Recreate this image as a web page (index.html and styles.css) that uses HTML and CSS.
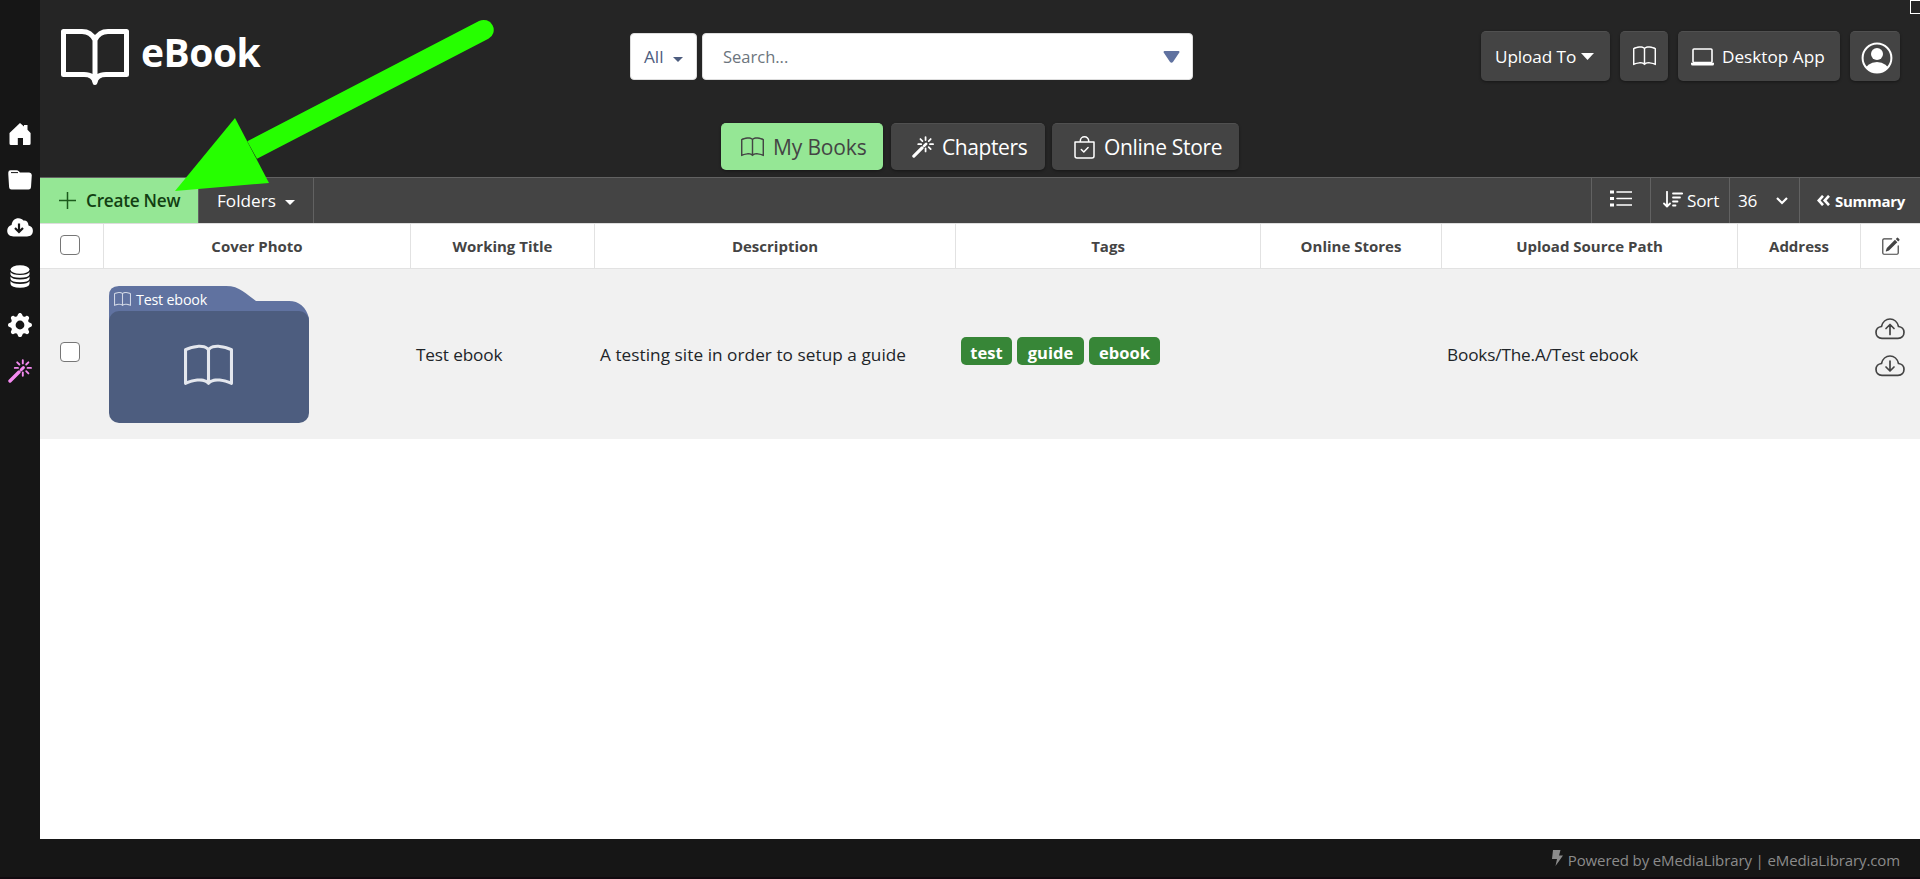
FILE: index.html
```html
<!DOCTYPE html>
<html lang="en">
<head>
<meta charset="utf-8">
<title>eBook</title>
<link rel="stylesheet" href="styles.css">
</head>
<body>
<svg class="defs" width="0" height="0">
  <symbol id="book" viewBox="0 0 16 16"><path fill="currentColor" d="M1 2.828c.885-.37 2.154-.769 3.388-.893 1.33-.134 2.458.063 3.112.752v9.746c-.935-.53-2.12-.603-3.213-.493-1.18.12-2.37.461-3.287.811V2.828zm7.5-.141c.654-.689 1.782-.886 3.112-.752 1.234.124 2.503.523 3.388.893v9.923c-.918-.35-2.107-.692-3.287-.81-1.094-.111-2.278-.039-3.213.492V2.687zM8 1.783C7.015.936 5.587.81 4.287.94c-1.514.153-3.042.672-3.994 1.105A.5.5 0 0 0 0 2.5v11a.5.5 0 0 0 .707.455c.882-.4 2.303-.881 3.68-1.02 1.409-.142 2.59.087 3.223.877a.5.5 0 0 0 .78 0c.633-.79 1.814-1.019 3.222-.877 1.378.139 2.8.62 3.681 1.02A.5.5 0 0 0 16 13.5v-11a.5.5 0 0 0-.293-.455c-.952-.433-2.48-.952-3.994-1.105C10.413.809 8.985.936 8 1.783z"/></symbol>
  <symbol id="wand" viewBox="0 0 24 24"><g fill="none" stroke="currentColor" stroke-linecap="round"><path stroke-width="3.4" d="M2 22 11 13"/><path stroke-width="3" d="M13.2 10.8 15.4 8.6"/><path stroke-width="1.9" d="M14.8 1.2v3.2M14.8 13.4v3.4M6.8 8.9h3.2M19.6 8.9H23M9.2 3.3l2.2 2.2M20.4 3.3 18.2 5.5M18.2 12.200l2.200 2.200"/></g></symbol>
  <symbol id="caret" viewBox="0 0 10 5"><path fill="currentColor" d="M0 0h10L5 5z"/></symbol>
</svg>
<div class="app">
  <nav class="side">
    <svg width="22" height="22" viewBox="0 0 22 22"><path fill="#fff" d="M11 0 15 3.6V2h3.5v4.7L21.6 10v10.5q0 1.5-1.5 1.5H14v-7H8.8v7H2Q.5 22 .5 20.5V10z"/></svg>
    <svg width="24" height="20" viewBox="0 0 24 20"><path fill="#fff" d="M.3 4.4V2.5Q.3.3 2.6.3h6q1.2 0 2.2 1l1.2 1.2h9.2q2.4 0 2.6 2.6l-.8 12.2q-.2 2.3-2.4 2.3H3.4q-2.1 0-2.3-2.3z"/><path stroke="#161616" d="M3 2.6h7"/></svg>
    <svg width="26" height="19" viewBox="0 0 26 19"><path fill="#fff" d="M6.5 18.5C3 18.500 .2 16.500 .2 12.800 .2 9.800 2 7.500 4.600 7 5 3 7.800 .3 11.500 .3 13.800 .3 15.300 1.200 16.300 2.600 19 2 21.500 4 21.500 7.500 24.300 8 25.900 10 25.900 12.800 25.900 16.500 23.500 18.500 20 18.500Z"/><path fill="none" stroke="#161616" stroke-width="2.2" d="M12 5.500v8M8 10l4 4 4-4"/></svg>
    <svg width="20" height="23" viewBox="0 0 20 23"><ellipse cx="10" cy="4.500" rx="9.500" ry="4.300" fill="#fff"/><path fill="#fff" d="M.5 7q1.500 3 9.500 3t9.500-3v2.500q-1 3.300-9.500 3.300T.5 9.500zM.5 11.500q1.500 3 9.500 3t9.500-3V14q-1 3.300-9.500 3.300T.5 14zM.5 16q1.500 3 9.500 3t9.500-3v3q-1 3.800-9.500 3.800T.5 19z"/></svg>
    <svg width="24" height="24" viewBox="0 0 16 16"><path fill="#fff" d="M9.405 1.050c-.413-1.400-2.397-1.400-2.810 0l-.1.340a1.464 1.464 0 0 1-2.105.872l-.31-.17c-1.283-.698-2.686.705-1.987 1.987l.169.311c.446.82.023 1.841-.872 2.105l-.34.1c-1.400.413-1.400 2.397 0 2.810l.34.1a1.464 1.464 0 0 1 .872 2.105l-.17.31c-.698 1.283.705 2.686 1.987 1.987l.311-.169a1.464 1.464 0 0 1 2.105.872l.1.34c.413 1.400 2.397 1.400 2.810 0l.1-.34a1.464 1.464 0 0 1 2.105-.872l.31.17c1.283.698 2.686-.705 1.987-1.987l-.169-.311a1.464 1.464 0 0 1 .872-2.105l.34-.1c1.400-.413 1.400-2.397 0-2.810l-.34-.1a1.464 1.464 0 0 1-.872-2.105l.17-.31c.698-1.283-.705-2.686-1.987-1.987l-.311.169a1.464 1.464 0 0 1-2.105-.872l-.1-.34zM8 10.930a2.929 2.929 0 1 1 0-5.860 2.929 2.929 0 0 1 0 5.858z"/></svg>
    <svg class="pink" width="24" height="24"><use href="#wand"/></svg>
  </nav>
  <div class="main">
    <header class="head">
      <div class="top">
        <div class="brand">
          <svg width="70" height="58" viewBox="0 0 70 58"><path fill="none" stroke="#fff" stroke-width="5" stroke-linejoin="round" stroke-linecap="round" d="M35 12Q31 3.500 22 3.500H3.500v43H24Q34 46.500 35 54.500 36 46.500 46 46.500H66.500v-43H48Q39 3.500 35 12zV54"/></svg>
          <span class="logo">eBook</span>
        </div>
        <div class="search">
          <div class="all"><span>All</span><svg width="10" height="5"><use href="#caret"/></svg></div>
          <div class="field"><span>Search...</span><svg width="17" height="12" viewBox="0 0 17 12"><path fill="#6072a0" stroke="#6072a0" stroke-width="2" stroke-linejoin="round" d="M1.500 1h14l-6.200 9.200q-.8 1-1.600 0z"/></svg></div>
        </div>
        <div class="actions">
          <div class="btn upload"><span>Upload To</span><svg width="13" height="7" viewBox="0 0 10 5" preserveAspectRatio="none"><path fill="#fff" d="M0 0h10L5 5z"/></svg></div>
          <div class="btn bookbtn"><svg width="23" height="23"><use href="#book"/></svg></div>
          <div class="btn desk"><svg width="23" height="18" viewBox="0 0 23 18"><rect x="2" y="1" width="19" height="13.500" rx="1" fill="none" stroke="#fff" stroke-width="1.600"/><path fill="#fff" d="M0 14.700h23v1.300q0 1.500-1.500 1.500h-20Q0 17.500 0 16z"/></svg><span>Desktop App</span></div>
          <div class="btn user"><svg width="32" height="32" viewBox="0 0 32 32"><clipPath id="face"><circle cx="16" cy="16" r="14.500"/></clipPath><circle cx="16" cy="16" r="14.400" fill="none" stroke="#fff" stroke-width="2"/><circle cx="16" cy="12" r="6" fill="#fff"/><ellipse cx="16" cy="29" rx="12" ry="9" fill="#fff" clip-path="url(#face)"/></svg></div>
        </div>
      </div>
      <div class="tabs">
        <div class="tab on"><svg width="23" height="23"><use href="#book"/></svg><span>My Books</span></div>
        <div class="tab chap"><svg width="22" height="22"><use href="#wand"/></svg><span>Chapters</span></div>
        <div class="tab store"><svg width="21" height="23" viewBox="0 0 21 23"><path fill="none" stroke="#fff" stroke-width="1.500" stroke-linejoin="round" stroke-linecap="round" d="M1 6h19V20q0 2-2 2H3q-2 0-2-2zM6.300 6V5a4.200 4.200 0 0 1 8.400 0v1M7.300 13.500l2.500 2.500 4.300-4.500"/></svg><span>Online Store</span></div>
      </div>
    </header>
    <div class="bar">
      <div class="create"><svg width="17" height="17" viewBox="0 0 17 17"><path stroke="#1c5a1c" stroke-width="1.500" d="M8.500 0v17M0 8.500h17"/></svg><span>Create New</span></div>
      <div class="folders"><span>Folders</span><svg width="10" height="5"><use href="#caret"/></svg></div>
      <div class="space"></div>
      <div class="list"><svg width="22" height="17" viewBox="0 0 22 17"><path stroke="#fff" stroke-width="1.600" stroke-linecap="round" d="M7 2h14.500M7 8.500h14.500M7 15h14.500"/><path fill="#fff" d="M0 .5h4v3H0zM0 7h4v3H0zM0 13.500h4v3H0z"/></svg></div>
      <div class="sort"><svg width="20" height="17" viewBox="0 0 20 17"><g fill="none" stroke="#fff" stroke-width="1.800" stroke-linecap="round" stroke-linejoin="round"><path d="M4 .8V15M1 12.500l3 3 3-3"/><path d="M10 2.500h9.200M10 6.500h7M10 10.500h4.500M10 14.500h2.500"/></g></svg><span>Sort</span></div>
      <div class="count"><span>36</span><svg width="12" height="8" viewBox="0 0 12 8"><path fill="none" stroke="#fff" stroke-width="2.200" d="m1 1 5 5 5-5"/></svg></div>
      <div class="summary"><svg width="13" height="11" viewBox="0 0 13 11"><path fill="none" stroke="#fff" stroke-width="2.600" d="M6 .8 1.700 5.500 6 10.200M12 .8 7.700 5.500l4.300 4.700"/></svg><span>Summary</span></div>
    </div>
    <div class="grid thead">
      <div class="cell"><i class="box"></i></div>
      <div class="cell">Cover Photo</div>
      <div class="cell">Working Title</div>
      <div class="cell">Description</div>
      <div class="cell">Tags</div>
      <div class="cell">Online Stores</div>
      <div class="cell">Upload Source Path</div>
      <div class="cell">Address</div>
      <div class="cell"><svg width="19" height="19" viewBox="0 0 16 16"><path fill="#444" d="M15.502 1.940a.5.5 0 0 1 0 .706L14.459 3.690l-2-2L13.502.646a.5.5 0 0 1 .707 0l1.293 1.293zm-1.750 2.456-2-2L4.939 9.210a.5.5 0 0 0-.121.196l-.805 2.414a.25.25 0 0 0 .316.316l2.414-.805a.5.5 0 0 0 .196-.12l6.813-6.814z"/><path fill="#444" d="M1 13.500A1.500 1.500 0 0 0 2.500 15h11a1.500 1.500 0 0 0 1.500-1.500v-6a.5.5 0 0 0-1 0v6a.5.5 0 0 1-.5.5h-11a.5.5 0 0 1-.5-.5v-11a.5.5 0 0 1 .5-.5H9a.5.5 0 0 0 0-1H2.500A1.500 1.500 0 0 0 1 2.500v11z"/></svg></div>
    </div>
    <div class="grid row">
      <div class="pick"><i class="box"></i></div>
      <div class="cover">
        <div class="folder">
          <svg class="shape" width="200" height="137" viewBox="0 0 200 137"><path fill="#6072a0" d="M0 45V10Q0 0 10 0h107c14 0 20 8 30 15h33q15 0 20 17v20H0z"/><rect y="25" width="200" height="112" rx="10" fill="#4d5d7f"/></svg>
          <div class="label"><svg width="17" height="17"><use href="#book"/></svg><span>Test ebook</span></div>
          <svg class="big" width="49" height="49"><use href="#book"/></svg>
        </div>
      </div>
      <div class="title"><span>Test ebook</span></div>
      <div class="desc"><span>A testing site in order to setup a guide</span></div>
      <div class="tags"><b class="t1">test</b><b class="t2">guide</b><b class="t3">ebook</b></div>
      <div></div>
      <div class="path"><span>Books/The.A/Test ebook</span></div>
      <div></div>
      <div class="clouds">
        <svg width="30" height="22" viewBox="0 0 30 22"><path class="ln" d="M6.500 8.500C7.500 4 11 1 15 1s7.500 3 8.500 7.500c3.300.3 5.500 2.800 5.500 5.800 0 3.500-2.300 6-6 6H7c-3.700 0-6-2.500-6-6 0-3 2.200-5.500 5.500-5.800z"/><path class="ln" d="M15 16.500V7M11 10.500l4-4 4 4"/></svg>
        <svg width="30" height="22" viewBox="0 0 30 22"><path class="ln" d="M6.500 8.500C7.500 4 11 1 15 1s7.500 3 8.500 7.500c3.300.3 5.500 2.800 5.500 5.800 0 3.500-2.300 6-6 6H7c-3.700 0-6-2.500-6-6 0-3 2.200-5.500 5.500-5.800z"/><path class="ln" d="M15 6v9.500M11 12l4 4 4-4"/></svg>
      </div>
    </div>
  </div>
  <footer class="foot"><svg width="11" height="16" viewBox="0 0 11 16"><path fill="#8b8b8b" d="M1 0h7.500L7 5.500h4L3.500 16 5 9H0z"/></svg><span>Powered by eMediaLibrary | eMediaLibrary.com</span></footer>
</div>
<svg class="arrow" width="320" height="180" viewBox="175 16 320 180"><path fill="#26ff00" d="m247.300 141.300 231.700-120.200a10 10 0 0 1 9.400 17.700L257 158.700z"/><path fill="#26ff00" d="m175 191 60-73 34 65z"/></svg>
<i class="corner"></i>
</body>
</html>
```
FILE: styles.css
```css
* { box-sizing: border-box; }
body {
  margin: 0;
  width: 1920px;
  height: 879px;
  overflow: hidden;
  background: #161616;
  font-family: "Open Sans", "Noto Sans", sans-serif;
  font-size: 17.2px;
  color: #212529;
}
svg { display: block; flex: none; }
span { white-space: nowrap; }
.defs { position: absolute; }
.app {
  display: grid;
  grid-template-columns: 40px 1880px;
  grid-template-rows: 839px 40px;
}

/* sidebar */
.side {
  display: flex;
  flex-direction: column;
  align-items: center;
  padding-top: 123px;
  gap: 25px;
}
.side svg:nth-child(3) { margin-top: 3px; }
.side svg:nth-child(4) { margin-top: 3px; }
.pink { color: #f48af0; margin-top: -3px; }

/* header */
.main { background: #fff; }
.head { height: 177px; background: #252525; }
.top { display: flex; height: 123px; align-items: flex-start; }
.brand { display: flex; width: 590px; padding: 28px 0 0 20px; }
.logo {
  margin-left: 11px;
  line-height: 47px;
  font-size: 39px;
  font-weight: 700;
  letter-spacing: -.5px;
  color: #fff;
}
.search { display: flex; gap: 5px; width: 851px; padding-top: 33px; }
.all, .field {
  display: flex;
  align-items: center;
  height: 47px;
  background: #fff;
  border: 1px solid #ddd;
  border-radius: 4px;
}
.all { width: 67px; padding-left: 13px; gap: 9px; color: #4d5d7f; }
.all svg { margin-top: 5px; }
.field { width: 491px; padding: 0 12px 0 20px; justify-content: space-between; color: #6c757d; font-size: 16.5px; }
.actions { display: flex; gap: 10px; padding-top: 31px; }
.btn, .tab {
  display: flex;
  align-items: center;
  background: #444;
  border-top: 1px solid #505050;
  border-radius: 5px;
  color: #fff;
  box-shadow: 0 1px 3px rgba(0, 0, 0, .4);
}
.btn { height: 50px; }
.upload { width: 129px; padding-left: 14px; gap: 5px; }
.upload span { letter-spacing: -.1px; }
.bookbtn { width: 48px; padding-left: 13px; }
.desk { width: 162px; padding-left: 13px; gap: 8px; }
.user { width: 50px; padding: 3px 0 0 11px; }
.tabs { display: flex; padding-left: 681px; }
.tab { height: 47px; font-size: 21px; }
.on { width: 162px; margin-right: 8px; padding-left: 20px; gap: 9px; background: #95e795; color: #444; border-color: #95e795; letter-spacing: -.15px; }
.chap { width: 154px; margin-right: 7px; padding-left: 21px; gap: 8px; letter-spacing: -.4px; }
.store { width: 187px; padding-left: 22px; gap: 9px; letter-spacing: -.3px; }

/* toolbar */
.bar { display: flex; height: 47px; background: #444; border-top: 1px solid #626262; border-bottom: 1px solid #ddd; color: #fff; }
.bar > div { display: flex; align-items: center; }
.create { width: 158px; padding-left: 19px; gap: 10px; background: #95e795; color: #123f12; font-weight: 600; letter-spacing: -.25px; }
.folders { width: 116px; padding-left: 18px; gap: 9px; border-left: 1px solid #626262; border-right: 1px solid #626262; }
.folders svg { margin-top: 3px; }
.bar .space { flex: 1; }
.list, .sort, .count, .summary { border-left: 1px solid #626262; }
.list { width: 59px; padding-left: 18px; }
.list svg { margin-top: -4px; }
.sort { width: 79px; padding-left: 12px; gap: 4px; letter-spacing: -.2px; }
.sort svg { margin-top: -3px; }
.count { width: 70px; padding-left: 8px; gap: 19px; letter-spacing: -.3px; }
.summary { width: 121px; padding-left: 17px; gap: 5px; font-size: 15px; font-weight: 700; letter-spacing: -.3px; }

/* table */
.grid { display: grid; grid-template-columns: 64px 307px 184px 361px 305px 181px 296px 123px 59px; }
.thead { height: 45px; border-bottom: 1px solid #e2e2e2; font-size: 15px; font-weight: 700; color: #444; }
.cell { display: flex; align-items: center; justify-content: center; border-right: 1px solid #e2e2e2; }
.cell:last-child { border: 0; }
.box { width: 20px; height: 20px; border: 1.500px solid #767676; border-radius: 4px; background: #fff; }
.cell .box { margin: -2px 0 0 -3px; }
.row { height: 170px; background: #f1f1f1; align-items: center; }
.pick { padding: 0 0 0 20px; }
.pick .box { display: block; margin-top: -4px; }
.cover { padding-left: 5px; }
.folder { position: relative; width: 200px; height: 137px; }
.shape { position: absolute; }
.label { position: relative; display: flex; align-items: center; height: 27px; padding-left: 5px; gap: 5px; font-size: 14.300px; letter-spacing: -.2px; color: #fff; }
.label svg { color: #d0d6e4; }
.big { position: relative; margin: 29px 0 0 75px; color: #e4e7ee; }
.title, .path, .desc { padding-left: 5px; }
.title, .path { letter-spacing: -.15px; }
.desc { letter-spacing: .05px; }
.tags { display: flex; gap: 5px; padding-left: 5px; margin-top: -6px; }
.tags b { height: 28px; border-radius: 5px; background: #378637; color: #fff; font-size: 16.500px; line-height: 31px; text-align: center; }
.t1 { width: 51px; }
.t2 { width: 67px; }
.t3 { width: 71px; }
.clouds { display: flex; flex-direction: column; align-items: center; gap: 15px; margin: -13px 0 0 -1px; }
.ln { fill: none; stroke: #444; stroke-width: 1.700; stroke-linecap: round; stroke-linejoin: round; }

/* footer */
.foot { grid-column: 1 / 3; display: flex; justify-content: flex-end; align-items: center; gap: 5px; padding: 3px 20px 0 0; color: #8b8b8b; font-size: 15px; letter-spacing: -.12px; border-bottom: 2px solid #110b10; }
.foot svg { margin-top: -3px; }

/* pointer overlay */
.arrow { position: absolute; left: 175px; top: 16px; }
.corner { position: absolute; left: 1910px; top: 0; width: 12px; height: 14px; border: 1px solid #fff; }
```
